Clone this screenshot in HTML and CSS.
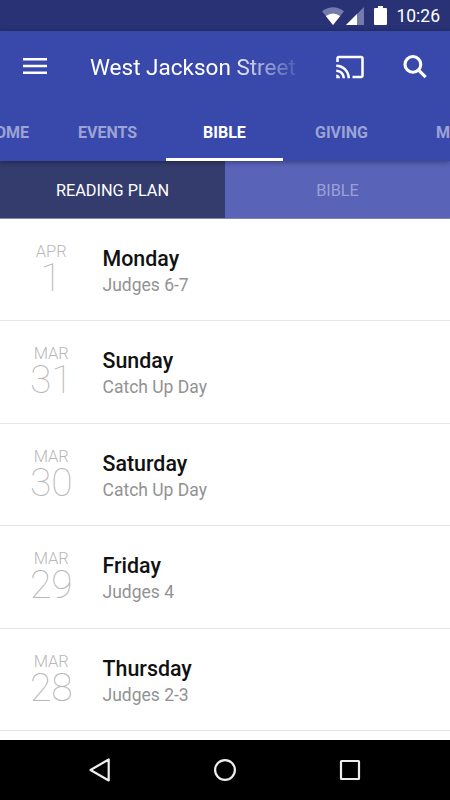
FILE: index.html
```html
<!DOCTYPE html>
<html lang="en">
<head>
    <meta charset="UTF-8">
    <meta name="viewport" content="width=device-width, initial-scale=1.0">
    <title>Reading Plan</title>
    <link rel="stylesheet" href="styles.css">
</head>
<body>
    <div class="screen">
        <div class="status-bar">
            <svg class="wifi" width="24" height="20" viewBox="0 0 24 20">
                <path d="M12 19 L1 5.200 Q12 -2.800 23 5.200 Z" fill="#737bad"/>
                <path d="M12 19 L4.800 10 Q12 5 19.200 10 Z" fill="#fff"/>
            </svg>
            <svg class="signal" width="18" height="18" viewBox="0 0 18 18">
                <path d="M0 18 L18 0 V18 Z" fill="#737bad"/>
                <path d="M0 18 L11 7 V18 Z" fill="#fff"/>
            </svg>
            <svg class="battery" width="13" height="19" viewBox="0 0 13 19">
                <path d="M4 0h5v2h3q1 0 1 1v15q0 1-1 1H1q-1 0-1-1V3q0-1 1-1h3z" fill="#fff"/>
            </svg>
            <span class="clock">10:26</span>
        </div>

        <header class="header">
            <div class="toolbar">
                <svg class="menu-icon" width="24" height="16" viewBox="0 0 24 16">
                    <path d="M0 0h24v2.500H0zM0 6.700h24v2.500H0zM0 13.400h24v2.500H0z" fill="#fff"/>
                </svg>
                <h1 class="title">West Jackson Street</h1>
                <svg class="cast-icon" width="30" height="30" viewBox="0 0 24 24">
                    <path d="M21 3H3c-1.100 0-2 .9-2 2v3h2V5h18v14h-7v2h7c1.100 0 2-.9 2-2V5c0-1.100-.9-2-2-2zM1 18v3h3c0-1.660-1.340-3-3-3zm0-4v2c2.760 0 5 2.240 5 5h2c0-3.870-3.130-7-7-7zm0-4v2c4.970 0 9 4.030 9 9h2c0-6.080-4.930-11-11-11z" fill="#fff"/>
                </svg>
                <svg class="search-icon" width="30" height="30" viewBox="0 0 24 24">
                    <circle cx="10.300" cy="9.900" r="6.300" fill="none" stroke="#fff" stroke-width="2.500"/>
                    <path d="M14.900 14.500 L20.500 20.100" fill="none" stroke="#fff" stroke-width="2.500"/>
                </svg>
            </div>
            <nav class="tabs">
                <div class="tab first">HOME</div>
                <div class="tab">EVENTS</div>
                <div class="tab active">BIBLE</div>
                <div class="tab">GIVING</div>
                <div class="tab last">MEDIA</div>
            </nav>
        </header>

        <div class="subtabs">
            <div class="subtab selected">READING PLAN</div>
            <div class="subtab">BIBLE</div>
        </div>

        <main class="list">
            <div class="row">
                <div class="date"><span class="month">APR</span><span class="number">1</span></div>
                <div class="info"><h2 class="day">Monday</h2><p class="reading">Judges 6-7</p></div>
            </div>
            <div class="row">
                <div class="date"><span class="month">MAR</span><span class="number">31</span></div>
                <div class="info"><h2 class="day">Sunday</h2><p class="reading">Catch Up Day</p></div>
            </div>
            <div class="row">
                <div class="date"><span class="month">MAR</span><span class="number">30</span></div>
                <div class="info"><h2 class="day">Saturday</h2><p class="reading">Catch Up Day</p></div>
            </div>
            <div class="row">
                <div class="date"><span class="month">MAR</span><span class="number">29</span></div>
                <div class="info"><h2 class="day">Friday</h2><p class="reading">Judges 4</p></div>
            </div>
            <div class="row">
                <div class="date"><span class="month">MAR</span><span class="number">28</span></div>
                <div class="info"><h2 class="day">Thursday</h2><p class="reading">Judges 2-3</p></div>
            </div>
        </main>

        <footer class="nav-bar">
            <svg width="24" height="26" viewBox="0 0 24 26">
                <path d="M2.500 13 L20.700 2.500 V23.500 Z" fill="none" stroke="#eee" stroke-width="2.200" stroke-linejoin="round"/>
            </svg>
            <svg width="24" height="24" viewBox="0 0 24 24">
                <circle cx="12" cy="12" r="9.900" fill="none" stroke="#eee" stroke-width="2.200"/>
            </svg>
            <svg width="24" height="24" viewBox="0 0 24 24">
                <rect x="3" y="3" width="18" height="18" rx=".5" fill="none" stroke="#eee" stroke-width="2.200"/>
            </svg>
        </footer>
    </div>
</body>
</html>
```

FILE: styles.css
```css
* {
    box-sizing: border-box;
}
body {
    font-family: Roboto, "Liberation Sans", sans-serif;
    background-color: #fff;
    margin: 0;
}
h1, h2, p {
    margin: 0;
}
svg {
    display: block;
    flex: none;
}
.screen {
    display: flex;
    flex-direction: column;
    width: 450px;
    height: 800px;
    overflow: hidden;
}

/* Status bar */
.status-bar {
    display: flex;
    align-items: center;
    justify-content: flex-end;
    height: 31px;
    flex: none;
    padding-right: 10px;
    background-color: #283275;
    color: #fff;
}
.signal {
    margin-left: 1px;
}
.battery {
    margin-left: 10px;
}
.clock {
    margin-left: 9px;
    padding-top: 1px;
    font-size: 17.5px;
    line-height: 31px;
}

/* Header */
.header {
    position: relative;
    flex: none;
    height: 130px;
    background-color: #3949ab;
    box-shadow: 0 1px 5px rgba(0, 0, 0, 0.4);
}
.toolbar {
    display: flex;
    align-items: center;
    height: 70px;
    padding: 0 20px 0 23px;
    color: #fff;
}
.title {
    width: 207px;
    margin-left: 43px;
    padding-top: 2px;
    font-size: 22.5px;
    font-weight: 400;
    line-height: 30px;
    white-space: nowrap;
    overflow: hidden;
    -webkit-mask-image: linear-gradient(to right, #000 140px, transparent 214px);
    mask-image: linear-gradient(to right, #000 140px, transparent 214px);
}
.cast-icon {
    margin-top: 1px;
    margin-left: auto;
}
.search-icon {
    margin-top: 1px;
    margin-left: 35px;
}
.tabs {
    display: flex;
    height: 60px;
    margin-left: -68px;
}
.tab {
    flex: 0 0 117px;
    padding-top: 2px;
    border-bottom: 3px solid transparent;
    font-size: 16px;
    font-weight: 700;
    line-height: 60px;
    height: 60px;
    text-align: center;
    color: #9ca4d5;
}
.tab.active {
    border-bottom-color: #fff;
    color: #fff;
}
.tab.first {
    padding-right: 20px;
    text-align: right;
}
.tab.last {
    padding-left: 36px;
    text-align: left;
}
.subtabs {
    display: flex;
    flex: none;
    height: 57.5px;
}
.subtab {
    flex: 1;
    padding-top: 1px;
    border-bottom: 1px solid #8388a8;
    background-color: #5963b8;
    color: #9ba1d4;
    font-size: 16.3px;
    line-height: 58px;
    text-align: center;
}
.subtab.selected {
    background-color: #343b6d;
    color: #fff;
}

/* Reading list */
.list {
    flex: 1;
    overflow: hidden;
}
.row {
    display: flex;
    height: 102.5px;
    border-bottom: 1px solid #e5e5e5;
}
.date {
    display: flex;
    flex-direction: column;
    align-items: center;
    width: 102.5px;
    padding-top: 23px;
    color: #b8b8b8;
}
.month {
    font-size: 16.5px;
    font-weight: 300;
    line-height: 20px;
}
.number {
    font-size: 39px;
    font-weight: 100;
    line-height: 32px;
}
.info {
    padding-top: 26.4px;
}
.day {
    font-size: 21.4px;
    font-weight: 500;
    line-height: 28px;
    color: #111;
}
.reading {
    font-size: 17.5px;
    line-height: 24px;
    color: #929292;
}

/* Android buttons */
.nav-bar {
    display: flex;
    align-items: center;
    justify-content: space-between;
    flex: none;
    height: 60px;
    padding: 0 88px;
    background-color: #000;
}
```
